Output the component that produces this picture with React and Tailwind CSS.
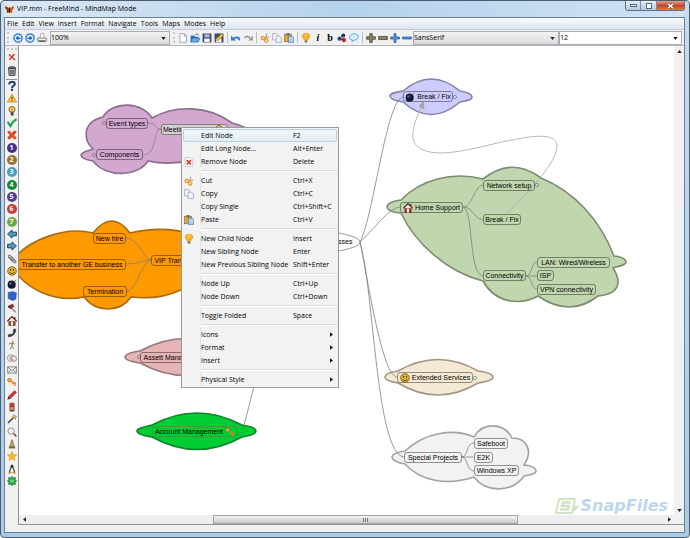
import React, { useState } from 'react';
import clsx from 'clsx';

// Small drawings, all on a 16x16 grid
const ICONS = {
    butterfly: (
        <>
            <rect width="16" height="16" fill="#f3e6d8" />
            <path d="M8 9 C5 2 1 1 0 3 C0 7 3 9 4 9 C2 10 2 14 5 14 C7 13 8 11 8 9 Z" fill="#8a3a10" />
            <path d="M8 9 C11 2 15 1 16 3 C16 7 13 9 12 9 C14 10 14 14 11 14 C9 13 8 11 8 9 Z" fill="#c45a18" />
            <path d="M8 4 V14" stroke="#2b1608" strokeWidth="2" />
        </>
    ),
    back: (
        <>
            <circle cx="8" cy="8" r="6.6" fill="#dff0ff" stroke="#3c86d0" strokeWidth="2.4" />
            <path d="M4 8 L8.500 4 V7 H12 V9.500 H8.500 V12 Z" fill="#1e62b4" />
        </>
    ),
    forward: (
        <>
            <circle cx="8" cy="8" r="6.600" fill="#dff0ff" stroke="#3c86d0" strokeWidth="2.400" />
            <path d="M12 8 L7.500 4 V7 H4 V9.500 H7.500 V12 Z" fill="#1e62b4" />
        </>
    ),
    printer: (
        <>
            <path d="M5 8 L6 1 H11 L11 8" fill="#fff" stroke="#888" />
            <path d="M1 8 H15 V13 H1 Z" fill="#e9e9e4" stroke="#777" strokeWidth="1.300" />
            <path d="M3 13 H13" stroke="#444" strokeWidth="2" />
        </>
    ),
    file: <path d="M3 1 H10 L13.500 4.500 V15 H3 Z M10 1 V5 H13.500" fill="#fff" stroke="#8a93a8" strokeWidth="1.200" />,
    open: (
        <>
            <path d="M1 4 H6 L8 6 H13 V14 H1 Z" fill="#2d74c4" />
            <path d="M4 8 H16 L13 14.500 H1 Z" fill="#5cb0f0" stroke="#1d5ba6" />
            <path d="M8 4 C10 0 13 1 14 4" fill="none" stroke="#2a68b4" strokeWidth="1.500" />
        </>
    ),
    save: (
        <>
            <rect x="1.500" y="1.500" width="13" height="13" fill="#4a5276" stroke="#2b3150" />
            <rect x="4" y="2" width="8" height="5" fill="#aab6e6" />
            <rect x="3.500" y="9" width="9" height="5.500" fill="#f4f4fa" />
        </>
    ),
    saveAs: (
        <>
            <rect x="1.500" y="1.500" width="13" height="13" fill="#4a5060" stroke="#2b3150" />
            <rect x="3" y="9" width="9" height="5.500" fill="#eee" />
            <path d="M12 1 L15 4 L7 12 L4 12 L4.500 9 Z" fill="#f4c33c" stroke="#8a6414" strokeWidth=".7" />
        </>
    ),
    undo: <path d="M0 4 V12 H8 L5.500 9.500 C8 7.500 11 8 13 12.500 C17.500 9 12 2 3.500 7.500 Z" fill="#2a7ad0" />,
    redo: <path d="M16 4 V12 H8 L10.500 9.500 C8 6.500 4 7 1.500 9 C2 3 8 2 12.500 7.500 Z" fill="#9a9ea4" />,
    cut: (
        <>
            <path d="M9 8 L11 1 M8 8 L15 6" stroke="#b9a488" strokeWidth="2" />
            <circle cx="4.500" cy="8" r="2.600" fill="none" stroke="#e8981c" strokeWidth="2.200" />
            <circle cx="10" cy="12" r="2.600" fill="none" stroke="#e8981c" strokeWidth="2.200" />
        </>
    ),
    copy: (
        <>
            <path d="M1 1 H7 L9 3 V11 H1 Z" fill="#fff" stroke="#7f88b8" />
            <path d="M6.500 5 H12 L15 8 V15 H6.500 Z" fill="#f3f5ff" stroke="#7f88b8" />
        </>
    ),
    paste: (
        <>
            <rect x="1" y="2" width="11" height="12" fill="#e2a63a" stroke="#93671a" />
            <rect x="4" y="0" width="5" height="4" fill="#6c7078" />
            <path d="M7 5 H13 L15.500 7.500 V15 H7 Z" fill="#a9d2f4" stroke="#4a6a9c" />
        </>
    ),
    bulb: (
        <>
            <path d="M8 .5 C2 .5 .5 5 3.500 8.500 C4.500 9.500 5.500 10 5.500 11.500 H10.500 C10.500 10 11.500 9.500 12.500 8.500 C15.500 5 14 .5 8 .5 Z" fill="#fbb427" stroke="#d0860c" />
            <path d="M6 12 H10 V15 H6 Z" fill="#77694c" />
            <path d="M6 3.500 C7 2.500 8 2.500 9 3" stroke="#fff3b8" strokeWidth="1.500" fill="none" />
        </>
    ),
    cloudColor: (
        <>
            <circle cx="10" cy="4" r="3.200" fill="#1d3464" />
            <circle cx="4" cy="9" r="3.400" fill="#2d4b84" />
            <circle cx="11" cy="11" r="3.600" fill="#d0302c" />
            <path d="M4 9 L10 4 M4 9 L11 11" stroke="#1d3464" strokeWidth="1.500" />
        </>
    ),
    cloud: <path d="M4 3 C6 0 10 1 11 2.500 C15 2 16 7 14 9 C12 12 9 11 8 11 L5 14 L5 11 C1 11 0 8 1 6 C1 4 3 3 4 3 Z" fill="#d9efff" stroke="#4a9be0" strokeWidth="1.500" />,
    plusDark: <path d="M6 1 H10 V6 H15 V10 H10 V15 H6 V10 H1 V6 H6 Z" fill="#8a8560" stroke="#4a4632" strokeWidth="1.300" />,
    minusDark: <path d="M1 5.500 H15 V10.500 H1 Z" fill="#8a8560" stroke="#4a4632" strokeWidth="1.300" />,
    plusBlue: <path d="M6.500 1 H9.500 V6.500 H15 V9.500 H9.500 V15 H6.500 V9.500 H1 V6.500 H6.500 Z" fill="#5a9be6" stroke="#1c4ea0" strokeWidth="1.200" />,
    minusBlue: <path d="M1 6.500 H15 V9.500 H1 Z" fill="#5a9be6" stroke="#1c4ea0" strokeWidth="1.200" />,
    remove: <path d="M2 3 C6 6 10 10 14 14 M13 2 C9 6 6 9 3 14" fill="none" stroke="#cf2f25" strokeWidth="2.600" />,
    trash: (
        <>
            <path d="M2.500 4 H13.500 L12.500 15.500 H3.500 Z" fill="#b8b8b8" stroke="#333" strokeWidth="1.400" />
            <path d="M1.500 3.500 C4 0 12 0 14.500 3.500 Z" fill="#777" stroke="#333" />
            <path d="M6 6 V13.500 M8 6 V13.500 M10 6 V13.500" stroke="#333" strokeWidth="1.100" />
        </>
    ),
    help: (
        <>
            <path d="M3.500 5.500 C3 0 13 0 12.500 5 C12.300 8 8 7.500 8 11" fill="none" stroke="#1b3470" strokeWidth="3" />
            <circle cx="8" cy="14" r="1.900" fill="#1b3470" />
        </>
    ),
    warning: (
        <>
            <path d="M8 1.500 L15.500 14.500 H.5 Z" fill="#fbc24a" stroke="#d08418" strokeWidth="1.200" />
            <path d="M8 6 V10 M8 11.500 V13" stroke="#5a3c08" strokeWidth="1.800" />
        </>
    ),
    idea: (
        <>
            <circle cx="8" cy="5.500" r="4.800" fill="#f7d070" stroke="#7a5418" strokeWidth="1.400" />
            <path d="M8 4 V10" stroke="#b56c10" strokeWidth="1.500" />
            <path d="M6 10 H10.500 V15 H6 Z" fill="#4a4236" />
        </>
    ),
    ok: <path d="M1 6 L5.500 13 C8 8 11 4 15.500 2" fill="none" stroke="#1fa548" strokeWidth="3.200" />,
    cross: (
        <>
            <path d="M2 2.500 L14 14 M14 2 L2 14" stroke="#d8441c" strokeWidth="4.600" />
            <path d="M3 3.500 L13 13" stroke="#f0845a" strokeWidth="1.200" />
        </>
    ),
    left: <path d="M1 8 L8 1.500 V5 H15 V11 H8 V14.500 Z" fill="#4b9cc4" stroke="#1c3f58" strokeWidth="1.500" />,
    right: <path d="M15 8 L8 1.500 V5 H1 V11 H8 V14.500 Z" fill="#4b9cc4" stroke="#1c3f58" strokeWidth="1.500" />,
    clip: <path d="M2 5 L11 14 C14 15 15 13 14 11 L5 2 C2 1 1 3 3 5 L11 12 M5 4 L13 12" fill="none" stroke="#444" strokeWidth="1.300" />,
    smile: (
        <>
            <circle cx="8" cy="8" r="6.900" fill="#e8b830" stroke="#6e5310" strokeWidth="1.300" />
            <path d="M5.800 4.500 V7.500 M10.200 4.500 V7.500" stroke="#3a2c08" strokeWidth="1.600" />
            <path d="M4 9.500 C6 13 10 13 12 9.500" fill="none" stroke="#3a2c08" strokeWidth="1.300" />
        </>
    ),
    bomb: (
        <>
            <circle cx="7.500" cy="9" r="6.500" fill="#141c34" />
            <circle cx="5.500" cy="7" r="2" fill="#4a6496" />
            <path d="M11.500 4.500 L14.500 1.500" stroke="#c65a38" strokeWidth="1.600" />
        </>
    ),
    desktop: <path d="M2 2.500 L9 1 L15 3 L14 13 L9 15 L2 12 Z" fill="#2b62cc" stroke="#1c479e" />,
    flag: (
        <>
            <path d="M3 4 L14 15" stroke="#2b2b2b" strokeWidth="1.600" />
            <path d="M1 6 C4 6 5 1 10 1 C9 4 12 5 13 6 C9 6 8 9 6 10 Z" fill="#a6281c" />
            <path d="M1 6 L4 8 L6 3 Z" fill="#222" />
        </>
    ),
    home: (
        <>
            <path d="M3 8 H13 V15 H3 Z" fill="#b04034" stroke="#4c2018" />
            <path d="M.5 8.500 L8 1 L15.500 8.500" fill="#f6e9e2" stroke="#5a1c14" strokeWidth="2" />
            <path d="M6.500 9 H9.500 V15 H6.500 Z" fill="#fff" />
            <path d="M12.500 1.500 V5" stroke="#5a1c14" strokeWidth="2" />
        </>
    ),
    phone: <path d="M2 14 C9 14 14 9 14 2 L10.500 2 L10 6 L11 6.500 C10 9 9 10 6.500 11 L5.500 9.500 L2 11 Z" fill="#3a3f48" stroke="#1e2228" />,
    fairy: (
        <>
            <circle cx="9" cy="3" r="2" fill="#c89a5c" />
            <path d="M3 6 L12 6 M9 5 L8 10 L5 15 M8 10 L11 14" stroke="#7a7c54" strokeWidth="1.600" fill="none" />
        </>
    ),
    list: (
        <>
            <circle cx="6" cy="8" r="5.400" fill="#e5e0ea" stroke="#84828e" />
            <circle cx="11" cy="9" r="4.400" fill="#f4e0e0" stroke="#b24c54" />
            <path d="M4 6 L11 12 M5 11 L9 4" stroke="#84828e" />
        </>
    ),
    mail: <path d="M1 3 H15 V13 H1 Z M1 3 L8 9 L15 3 M1 13 L6 8 M15 13 L10 8" fill="#f1f1e8" stroke="#6b6f68" strokeWidth="1.200" />,
    key: (
        <>
            <circle cx="4" cy="5" r="2.800" fill="#f7b53c" stroke="#c96c14" strokeWidth="1.600" />
            <path d="M6 6.500 L14.500 10.500 M10 8.500 L9 12 M13.500 10 L12.500 14" stroke="#d88a1c" strokeWidth="2.200" />
        </>
    ),
    pencil: (
        <>
            <path d="M12 1 L15 4 L5 14 L2 11 Z" fill="#d4382e" stroke="#7e1e18" />
            <path d="M2 11 L5 14 L.5 15.500 Z" fill="#3a2420" />
        </>
    ),
    stop: (
        <>
            <rect x="4" y="1" width="8" height="14" rx="2" fill="#444" />
            <rect x="5" y="2" width="6" height="5" fill="#d8402c" />
            <rect x="5" y="8" width="6" height="5" fill="#e8803c" />
        </>
    ),
    wand: (
        <>
            <path d="M1.500 14.500 L10 6" stroke="#3f3f3f" strokeWidth="2.400" />
            <path d="M12 1 L13 3.500 L15.500 4 L13.500 6 L13.500 8.500 L11.500 7 L9 7.500 L10 5 L9 3 L11 3 Z" fill="#e0c468" stroke="#7a6220" strokeWidth=".8" />
        </>
    ),
    lens: (
        <>
            <circle cx="6.500" cy="6.500" r="5" fill="#eef4f8" stroke="#8a8f98" strokeWidth="1.500" />
            <path d="M10.500 10.500 L15 15" stroke="#8c3c34" strokeWidth="2.400" />
        </>
    ),
    bell: (
        <>
            <path d="M8 1 C6 2 7 5 6 8 L4 12 H12 L10 8 C9 5 10 2 8 1 Z" fill="#c9ad5c" stroke="#5a4b1e" />
            <path d="M3 14 H13" stroke="#5a4b1e" strokeWidth="2" />
        </>
    ),
    star: <path d="M8 .8 L10.200 5.600 L15.500 6.200 L11.500 9.800 L12.700 15 L8 12.300 L3.300 15 L4.500 9.800 L.5 6.200 L5.800 5.600 Z" fill="#f9b52b" stroke="#d8880e" strokeWidth=".8" />,
    penguin: (
        <>
            <path d="M8 1 C5 1 6 5 5 7 C3 10 3 13 4 14 H12 C13 13 13 10 11 7 C10 5 11 1 8 1 Z" fill="#2b2b2b" />
            <path d="M8 5 C6 8 4.500 11 5.500 13.500 H10.500 C11.500 11 10 8 8 5 Z" fill="#fff" />
            <path d="M1.500 14.500 H6 M10 14.500 H14.500" stroke="#e0a32a" strokeWidth="2.200" />
        </>
    ),
    bug: (
        <>
            <path d="M8 .5 L10 3 L13.500 2.500 L13 6 L15.500 8 L13 10 L13.500 13.500 L10 13 L8 15.500 L6 13 L2.500 13.500 L3 10 L.5 8 L3 6 L2.500 2.500 L6 3 Z" fill="#2da84a" stroke="#14702c" />
            <path d="M5 6 L11 10 M11 6 L5 10" stroke="#a8e8a8" strokeWidth="1.200" />
        </>
    ),
    removeNode: (
        <>
            <path d="M2 1 H10 L14 4 V15 H2 Z" fill="#fff" stroke="#a9aec0" />
            <path d="M4.500 5 L11 12 M11 5 L4.500 12" stroke="#d2382a" strokeWidth="2.600" />
        </>
    ),
};

const Icon = ({ name, className = "size-[10px]" }) => (
    <svg viewBox="0 0 16 16" className={clsx("block shrink-0", className)} aria-hidden="true">
        {ICONS[name]}
    </svg>
);

const MENUS = ["File", "Edit", "View", "Insert", "Format", "Navigate", "Tools", "Maps", "Modes", "Help"];

const TOOLBAR = [
    ["file", "open", "save", "saveAs"],
    ["undo", "redo"],
    ["cut", "copy", "paste"],
    ["bulb", "italic", "bold", "cloudColor", "cloud"],
    ["plusDark", "minusDark", "plusBlue", "minusBlue"],
];

const SIDE_ICONS = [
    "help", "warning", "idea", "ok", "cross", 1, 2, 3, 4, 5, 6, 7, "left", "right", "clip", "smile", "bomb",
    "desktop", "flag", "home", "phone", "fairy", "list", "mail", "key", "pencil", "stop", "wand", "lens",
    "bell", "star", "penguin", "bug",
];

const BADGES = ["", "bg-[#4a2f86]", "bg-[#9a7030]", "bg-[#4a9cc4]", "bg-[#128a30]", "bg-[#4f4090]", "bg-[#cc3a34]", "bg-[#6ea84a]"];

const CONTEXT_MENU = [
    [
        { label: "Edit Node", keys: "F2", active: true },
        { label: "Edit Long Node...", keys: "Alt+Enter" },
        { label: "Remove Node", keys: "Delete", icon: "removeNode" },
    ],
    [
        { label: "Cut", keys: "Ctrl+X", icon: "cut" },
        { label: "Copy", keys: "Ctrl+C", icon: "copy" },
        { label: "Copy Single", keys: "Ctrl+Shift+C" },
        { label: "Paste", keys: "Ctrl+V", icon: "paste" },
    ],
    [
        { label: "New Child Node", keys: "Insert", icon: "bulb" },
        { label: "New Sibling Node", keys: "Enter" },
        { label: "New Previous Sibling Node", keys: "Shift+Enter" },
    ],
    [
        { label: "Node Up", keys: "Ctrl+Up" },
        { label: "Node Down", keys: "Ctrl+Down" },
    ],
    [{ label: "Toggle Folded", keys: "Space" }],
    [
        { label: "Icons", submenu: true },
        { label: "Format", submenu: true },
        { label: "Insert", submenu: true },
    ],
    [{ label: "Physical Style", submenu: true }],
];

// Scroll offset of the visible part of the map
const VIEW = { x: 19, y: 46 };

const NODES = [
    { text: "Event types", x: 106, y: 118, w: 42 },
    { text: "Components", x: 96, y: 149, w: 47 },
    { text: "Meeting", x: 161, y: 124, w: 67, selected: true, iconAfter: "idea" },
    { text: "New hire", x: 93, y: 233, w: 33 },
    { text: "Transfer to another GE business", x: 18, y: 259, w: 108 },
    { text: "Termination", x: 83, y: 286, w: 44 },
    { text: "VIP Tran", x: 151, y: 255, w: 34 },
    { text: "Assett Mana", x: 140, y: 352, w: 46 },
    { text: "Account Management", x: 152, y: 426, w: 86, iconAfter: "key", faint: true },
    { text: "Break / Fix", x: 403, y: 91, w: 50, icon: "bomb" },
    { text: "Home Support", x: 400, y: 202, w: 63, icon: "home" },
    { text: "Network setup", x: 483, y: 180, w: 52 },
    { text: "Break / Fix", x: 483, y: 214, w: 38 },
    { text: "Connectivity", x: 483, y: 270, w: 43 },
    { text: "LAN: Wired/Wireless", x: 537, y: 257, w: 73 },
    { text: "ISP", x: 537, y: 270, w: 17 },
    { text: "VPN connectivity", x: 537, y: 284, w: 59 },
    { text: "Extended Services", x: 397, y: 372, w: 76, icon: "smile" },
    { text: "Special Projects", x: 404, y: 452, w: 58 },
    { text: "Safeboot", x: 474, y: 438, w: 34 },
    { text: "E2K", x: 474, y: 452, w: 19 },
    { text: "Windows XP", x: 474, y: 465, w: 45 },
];

const CLOUDS = [
    { fill: "#d3a8d0", stroke: "#8a6c8c", d: "M103 117 C112 101 142 101 152 118 C175 105 208 105 232 123 C240 125 247 127 247 130 C247 133 240 135 232 137 C215 160 175 167 148 161 C138 177 106 178 93 161 C87 160 81 158 81 155 C81 152 87 151 93 149 C83 140 82 122 103 117 Z" },
    { fill: "#ff9900", stroke: "#a86a0c", d: "M10 264 C25 240 65 226 93 233 Q112 209 130 233 C160 226 195 228 220 250 C200 290 165 301 131 297 C120 313 96 313 84 297 C55 303 25 290 10 264 Z" },
    { fill: "#e6b4b4", stroke: "#94787a", d: "M140 351 Q186 326 232 351 C240 352 247 354 247 357 C247 360 240 361 232 363 Q186 388 140 363 C133 362 125 360 125 357 C125 354 133 352 140 351 Z" },
    { fill: "#00cc33", stroke: "#0f8428", d: "M152 425 Q197 401 242 425 C249 426 256 428 256 431 C256 434 249 436 242 437 Q197 462 152 437 C145 436 137 434 137 431 C137 428 145 427 152 425 Z" },
    { fill: "#ccccff", stroke: "#8484a8", d: "M403 91 Q431 67 460 91 C466 92 472 94 472 97 C472 100 466 101 460 102 Q431 127 403 102 C397 101 390 99 390 96 C390 93 397 92 403 91 Z" },
    { fill: "#c0d6ae", stroke: "#7c8c70", d: "M401 200 C420 180 452 171 483 179 Q512 156 541 178 C575 192 600 220 614 256 C620 256 626 259 626 262 C626 265 620 266 613 268 C622 282 620 294 598 296 Q570 318 538 296 C520 306 495 303 483 281 C447 272 415 243 401 213 C394 213 387 210 387 207 C387 203 394 201 401 200 Z" },
    { fill: "#f5e9d3", stroke: "#a09684", d: "M398 371 Q438 348 478 371 C485 372 493 374 493 377 C493 380 485 382 478 383 Q438 407 398 383 C392 382 385 380 385 377 C385 374 392 372 398 371 Z" },
    { fill: "#f2f2f2", stroke: "#a2a2a2", d: "M405 451 C425 432 455 428 474 437 C482 422 504 422 512 438 C526 438 534 450 524 465 C530 465 536 468 536 471 C536 474 530 475 524 476 C512 493 486 493 474 477 C447 486 420 481 405 464 C398 463 392 460 392 457 C392 454 398 452 405 451 Z" },
];

const EDGES = [
    "M360 242 C374 215 386 100 403 97",
    "M360 242 C372 232 388 208 400 207",
    "M360 242 C368 280 382 376 397 377",
    "M360 242 C374 290 376 454 404 457",
    "M244 425 C248 410 252 395 258 370",
    "M463 207 C472 208 474 186 483 185",
    "M463 207 C472 206 474 219 483 220",
    "M463 207 C474 210 468 274 483 276",
    "M526 276 C532 276 531 262 537 262",
    "M526 276 H537",
    "M526 276 C532 276 531 289 537 289",
    "M462 457 C468 457 466 443 474 443",
    "M462 457 H474",
    "M462 457 C468 457 466 471 474 471",
    "M161 129 C154 130 158 123 148 123",
    "M161 129 C152 130 158 155 143 155",
    "M151 260 C142 259 140 239 126 238",
    "M151 260 C142 260 140 264 126 264",
    "M151 260 C142 261 136 291 127 291",
];

const FOLDED = [[455, 97], [537, 185], [475, 378], [104, 123], [94, 155], [139, 357]];

const Node = ({ node }) => (
    <div
        className={clsx(
            "absolute flex h-[11px] items-center gap-[2px] whitespace-nowrap rounded-[3px] border text-[7px] leading-[9px] text-black",
            node.faint ? "border-[#3f9a3f]" : "border-black/40",
            node.selected ? "justify-between bg-[#d2d2d2] pl-px pr-[3px]" : "justify-center"
        )}
        style={{ left: node.x - VIEW.x, top: node.y - VIEW.y, width: node.w }}
    >
        {node.icon && <Icon name={node.icon} />}
        <span>{node.text}</span>
        {node.iconAfter && <Icon name={node.iconAfter} />}
    </div>
);

const Caret = ({ className }) => (
    <svg viewBox="0 0 6 4" className={clsx("h-[3px] w-[5px]", className)} aria-hidden="true">
        <path d="M0 0 H6 L3 4 Z" fill="#222" />
    </svg>
);

const Combo = ({ label, options, className }) => {
    const [value, setValue] = useState(options[0]);

    return (
        <div className={clsx("relative h-[14px] border border-[#a9adb3]", className)}>
            <select
                aria-label={label}
                value={value}
                onChange={(e) => setValue(e.target.value)}
                className="block h-full w-full appearance-none bg-transparent text-[7px] leading-[12px] text-black outline-none"
            >
                {options.map((option) => <option key={option}>{option}</option>)}
            </select>
            <Caret className="pointer-events-none absolute right-[3px] top-[5px]" />
        </div>
    );
};

const ToolButton = ({ name }) => (
    <button aria-label={name} className="flex w-[12px] shrink-0 items-center justify-center text-[10px] leading-[12px] text-black">
        {name === "italic" && <span className="font-['Liberation_Serif',serif] font-bold italic">i</span>}
        {name === "bold" && <span className="font-['Liberation_Serif',serif] font-bold">b</span>}
        {ICONS[name] && <Icon name={name} />}
    </button>
);

const Grip = ({ className }) => <div className={clsx("shrink-0 border-dotted border-[#c4c8ce]", className)} />;

const TitleBar = () => (
    <header className="flex h-[16px] shrink-0 items-start justify-between bg-linear-to-r from-[#dbe8f6] via-[#b5d2ec] to-[#cfe2f4] pl-px">
        <div className="flex h-[16px] items-center gap-[3px]">
            <Icon name="butterfly" className="size-[9px]" />
            <h1 className="text-[7px] leading-[10px] text-black">VIP.mm - FreeMind - MindMap Mode</h1>
        </div>
        <div className="flex h-[10px] overflow-hidden rounded-b-[3px] border border-t-0 border-[#5c7086]">
            <button aria-label="Minimize" className="flex w-[15px] items-center justify-center border-r border-[#7c8fa4] bg-linear-to-b from-[#e3edf7] to-[#b3c8de]">
                <span className="h-[3px] w-[7px] border border-[#5b6878] bg-white" />
            </button>
            <button aria-label="Maximize" className="flex w-[16px] items-center justify-center border-r border-[#7c8fa4] bg-linear-to-b from-[#e3edf7] to-[#b3c8de]">
                <span className="size-[6px] border border-[#5b6878] bg-white" />
            </button>
            <button aria-label="Close" className="flex w-[27px] items-center justify-center bg-linear-to-b from-[#e2a088] via-[#c8462a] to-[#dc7838]">
                <svg viewBox="0 0 8 7" className="h-[6px] w-[7px]" aria-hidden="true">
                    <path d="M1 1 L7 6 M7 1 L1 6" stroke="#5b3a38" strokeWidth="3" />
                    <path d="M1 1 L7 6 M7 1 L1 6" stroke="#fff" strokeWidth="1.800" />
                </svg>
            </button>
        </div>
    </header>
);

const Toolbar = () => (
    <div className="flex h-[16px] shrink-0 items-center border-b border-[#b3b7bd] bg-[#f1f1f1] pl-[2px]">
        <Grip className="h-[11px] w-[5px] border-l-2" />
        <ToolButton name="back" />
        <ToolButton name="forward" />
        <ToolButton name="printer" />
        <Combo label="Zoom" options={["100%", "75%", "50%"]} className="ml-[2px] w-[120px] bg-linear-to-b from-[#f2f2f2] to-[#dcdcdc]" />
        <Grip className="ml-[3px] h-[11px] w-[4px] border-l-2" />
        {TOOLBAR.map((group, index) => (
            <div key={index} className="flex shrink-0 items-center">
                {index > 0 && <div className="mx-[2px] h-[11px] w-px bg-[#b9bcc2]" />}
                {group.map((name) => <ToolButton key={name} name={name} />)}
            </div>
        ))}
        <Combo label="Font" options={["SansSerif", "Serif"]} className="w-[146px] bg-linear-to-b from-[#f2f2f2] to-[#dcdcdc]" />
        <Combo label="Font size" options={["12", "14", "16"]} className="mr-[2px] min-w-0 flex-1 bg-white" />
    </div>
);

const SideBar = () => (
    <aside className="flex w-[13px] shrink-0 flex-col items-center overflow-hidden bg-[#f1f1f1] pt-[2px]">
        <Grip className="h-[3px] w-[10px] border-t-2" />
        <button aria-label="Remove last icon" className="flex h-[12px] items-center"><Icon name="remove" className="size-[8px]" /></button>
        <button aria-label="Remove all icons" className="mt-[2px] flex h-[12px] items-center"><Icon name="trash" /></button>
        <div className="mt-[2px] h-px w-[11px] bg-[#8b9198]" />
        <div className="flex h-[407px] shrink-0 flex-col justify-between">
            {SIDE_ICONS.map((name) => (
                <button key={name} aria-label={`Icon ${name}`} className="flex h-[12px] items-center justify-center">
                    {typeof name === "number" ? (
                        <span className={clsx("size-[10px] rounded-full text-center text-[7px] font-bold leading-[10px] text-white", BADGES[name])}>{name}</span>
                    ) : (
                        <Icon name={name} />
                    )}
                </button>
            ))}
        </div>
    </aside>
);

const ContextMenu = () => (
    <div role="menu" className="absolute left-[162px] top-[81px] w-[158px] border border-[#9a9a9a] bg-[#f2f2f2] p-px font-['Open_Sans','Noto_Sans',sans-serif] text-[7px] leading-[13px] text-black">
        {CONTEXT_MENU.map((group, index) => (
            <div key={index}>
                {index > 0 && (
                    <div className="flex h-[6px] items-center">
                        <div className="ml-[18px] h-[2px] flex-1 border-t border-[#dcdcdc] bg-white" />
                    </div>
                )}
                {group.map((item) => (
                    <button
                        key={item.label}
                        role="menuitem"
                        className={clsx(
                            "flex h-[13px] w-full items-center text-left",
                            item.active && "rounded-[2px] bg-linear-to-b from-[#f2f7fb] to-[#dfecf5] outline -outline-offset-1 outline-[#b6d3e6]"
                        )}
                    >
                        <span className="flex h-full w-[17px] shrink-0 items-center pl-px">
                            {item.icon && <Icon name={item.icon} />}
                        </span>
                        <span className={clsx("h-full w-[93px] shrink-0 whitespace-nowrap border-l", item.active ? "border-transparent" : "border-[#e2e3e3]")}>{item.label}</span>
                        <span className="flex-1 whitespace-nowrap">{item.keys}</span>
                        {item.submenu && (
                            <svg viewBox="0 0 4 6" className="mr-[4px] h-[5px] w-[3px]" aria-hidden="true">
                                <path d="M0 0 L4 3 L0 6 Z" fill="#111" />
                            </svg>
                        )}
                    </button>
                ))}
            </div>
        ))}
    </div>
);

const Watermark = () => (
    <div className="absolute bottom-0 right-[6px] flex items-center">
        <svg viewBox="0 0 26 16" className="h-[16px] w-[26px]" aria-hidden="true">
            <path d="M4 1 H20 L17 15 H1 Z" fill="#fff" stroke="#cfe5c4" strokeWidth="2" strokeLinejoin="round" />
            <path d="M16 4.500 H8 L7 8 H14 L13 11.500 H5" fill="none" stroke="#cfe5c4" strokeWidth="2.400" />
            <path d="M20 3 L19 8 H25 L17 15 L19 8" fill="#cfe5c4" />
        </svg>
        <span className="font-['DejaVu_Sans',sans-serif] text-[16px] font-bold italic leading-[18px] text-[#bcd6f0]">SnapFiles</span>
    </div>
);

const MindMap = () => (
    <main className="relative min-h-0 min-w-0 flex-1 overflow-hidden bg-white font-['Liberation_Sans',Arial,sans-serif]">
        <svg viewBox="19 46 690 480" className="absolute left-0 top-0 h-[480px] w-[690px]" aria-hidden="true">
            {CLOUDS.map((cloud) => (
                <path key={cloud.d} d={cloud.d} fill={cloud.fill} stroke={cloud.stroke} strokeWidth="1.600" />
            ))}
            <ellipse cx="270" cy="242" rx="90" ry="14" fill="#fff" stroke="#808080" strokeWidth=".8" />
            {EDGES.map((d) => (
                <path key={d} d={d} fill="none" stroke="#808080" strokeWidth=".8" />
            ))}
            {FOLDED.map(([cx, cy]) => (
                <circle key={`${cx}-${cy}`} cx={cx} cy={cy} r="1.700" fill="none" stroke="#777" strokeWidth=".7" />
            ))}
            <path d="M508 213 C540 180 557 160 557 145 C556 135 540 135 523 138 C495 142 465 153 440 153 C412 152 405 140 422 106" fill="none" stroke="#b0b0b0" strokeWidth=".9" />
            <path d="M423 102 L424 109 L419 106 Z" fill="#a4a4a4" stroke="#a4a4a4" />
        </svg>
        <span className="absolute left-[319px] top-[191px] text-[7px] leading-[10px] text-black">sses</span>
        {NODES.map((node) => <Node key={`${node.x}-${node.y}`} node={node} />)}
        <Watermark />
        <ContextMenu />
    </main>
);

const Arrow = ({ label, className }) => (
    <button aria-label={label} className="flex size-[10px] shrink-0 items-center justify-center">
        <Caret className={className} />
    </button>
);

const HorizontalScroll = ({ start, size }) => (
    <div className="flex h-[9px] min-w-0 flex-1 items-center bg-[#eeeeee]">
        <Arrow label="Scroll left" className="rotate-90" />
        <div className="flex h-full min-w-0 flex-1">
            <div
                className="flex h-full items-center justify-center gap-px border border-[#a4a4a4] bg-linear-to-b from-[#f4f4f4] to-[#c9c9c9]"
                style={{ marginLeft: `${start}%`, width: `${size}%` }}
            >
                <span className="h-[4px] w-px bg-[#777]" />
                <span className="h-[4px] w-px bg-[#777]" />
                <span className="h-[4px] w-px bg-[#777]" />
            </div>
        </div>
        <Arrow label="Scroll right" className="-rotate-90" />
    </div>
);

const App = () => {
    return (
        <div className="flex h-screen flex-col overflow-hidden rounded-[4px] border border-[#4d5c6e] bg-linear-to-b from-[#c8dcf0] to-[#a8cbe8] pb-[4px] pl-[3px] pr-[4px] font-['Open_Sans','Noto_Sans',sans-serif]">
            <TitleBar />
            <div className="flex min-h-0 flex-1 flex-col border border-[#6b8096] bg-[#f1f1f1]">
                <nav className="flex h-[12px] shrink-0 items-center gap-[4px] border-b border-[#c4ccd8] bg-linear-to-b from-[#fafcfe] to-[#dbe4f1] pl-[2px]">
                    {MENUS.map((menu) => (
                        <button key={menu} className="text-[7px] leading-[10px] text-black">{menu}</button>
                    ))}
                </nav>
                <Toolbar />
                <div className="flex min-h-0 flex-1">
                    <SideBar />
                    <div className="flex min-w-0 flex-1 flex-col border-b border-l border-[#8b95a1]">
                        <div className="flex min-h-0 flex-1">
                            <MindMap />
                            <div className="flex w-[10px] shrink-0 flex-col justify-between bg-[#f1f1f1]">
                                <Arrow label="Scroll up" className="rotate-180" />
                                <Arrow label="Scroll down" />
                            </div>
                        </div>
                        <div className="flex">
                            <HorizontalScroll start={29} size={48} />
                            <div className="w-[10px] shrink-0 bg-[#f1f1f1]" />
                        </div>
                    </div>
                </div>
                <footer className="h-[7px] shrink-0" />
            </div>
        </div>
    );
};

export default App;
